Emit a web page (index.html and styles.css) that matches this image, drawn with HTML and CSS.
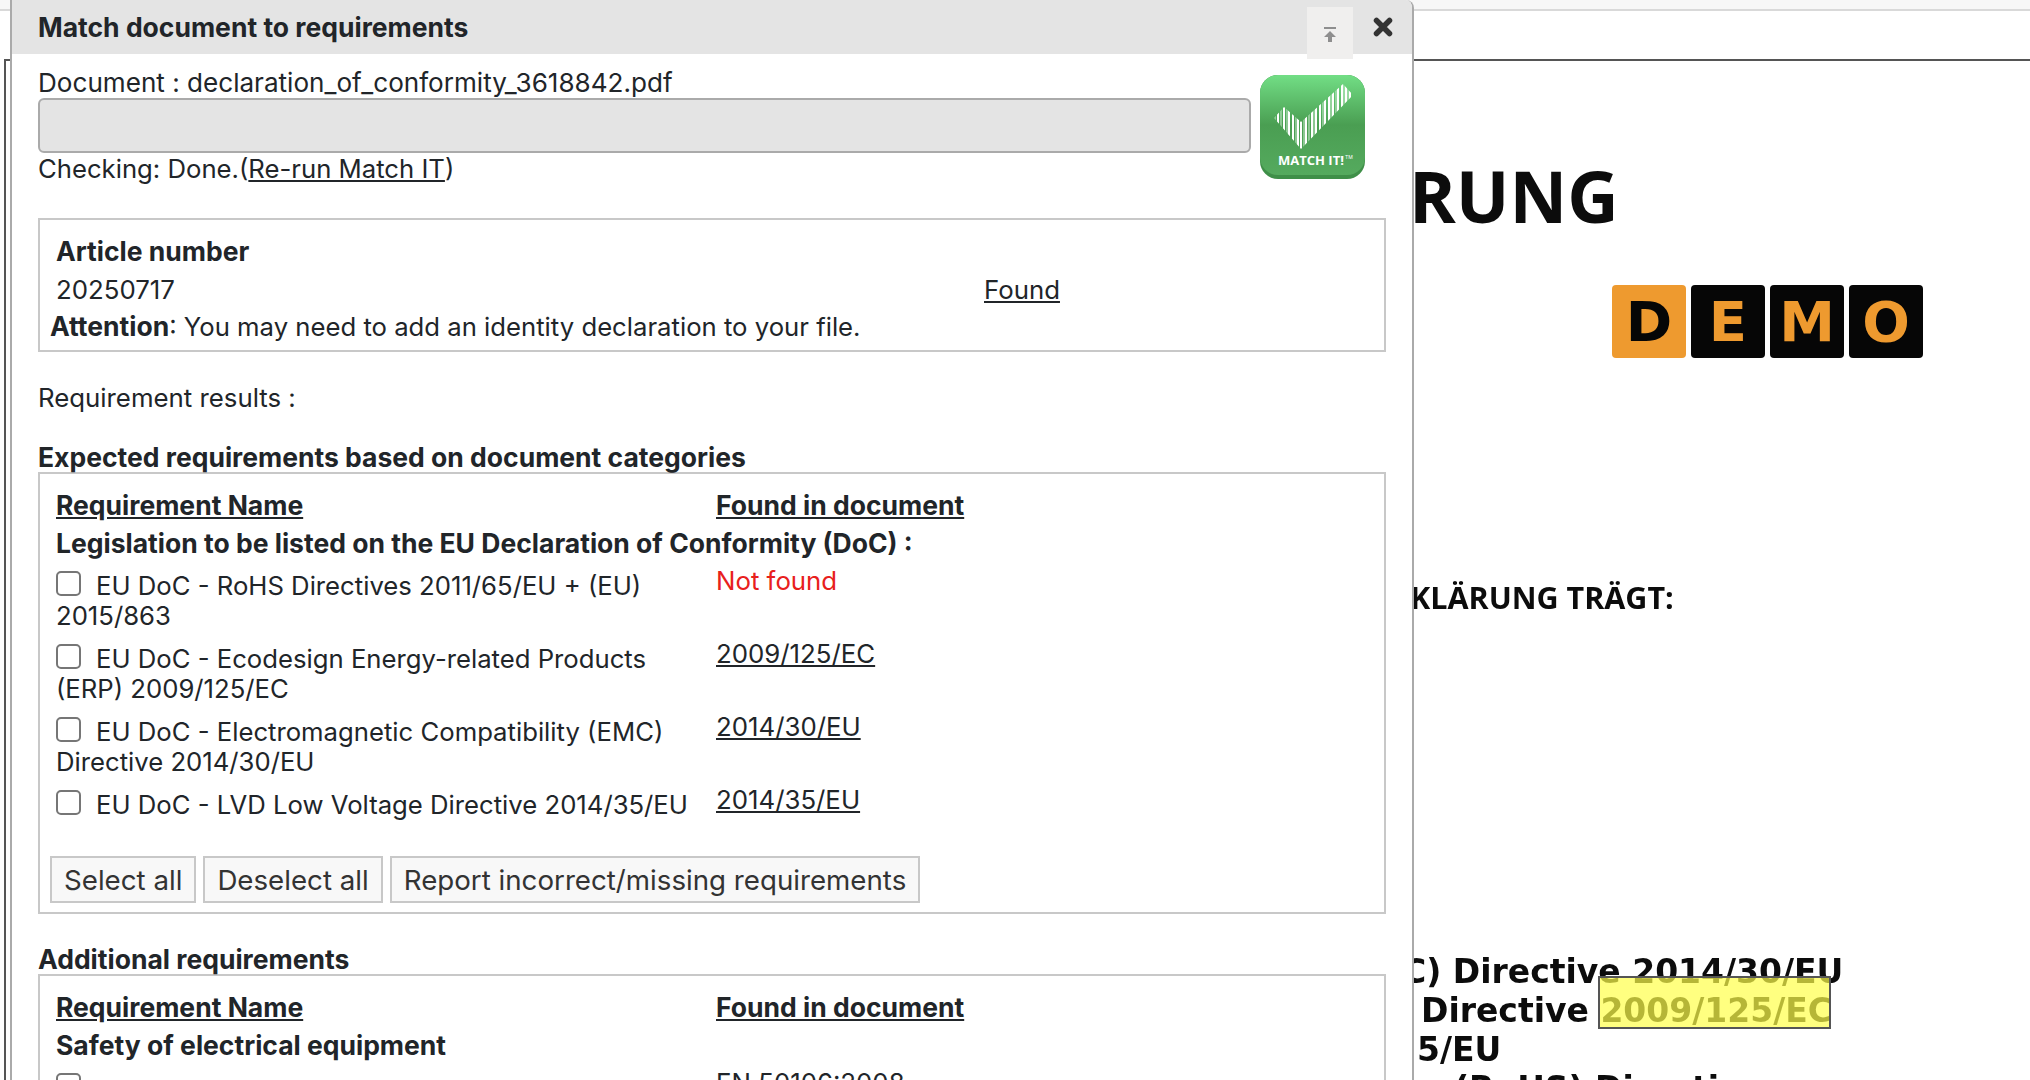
FILE: index.html
```html
<!DOCTYPE html>
<html lang="en">
<head>
    <meta charset="UTF-8">
    <meta name="viewport" content="width=device-width, initial-scale=1.0">
    <title>Match document to requirements</title>
    <link rel="stylesheet" href="styles.css">
</head>
<body>
    <div class="top-strip"></div>
    <div class="pdf-page">
        <div class="pdf-text pdf-title">RUNG</div>
        <div class="demo-stamp">
            <span class="demo-tile demo-first">D</span>
            <span class="demo-tile">E</span>
            <span class="demo-tile">M</span>
            <span class="demo-tile">O</span>
        </div>
        <div class="pdf-text pdf-sub">KLÄRUNG TRÄGT:</div>
        <div class="pdf-text pdf-line pdf-line1">C) Directive 2014/30/EU</div>
        <div class="pdf-text pdf-line pdf-line2">Directive 2009/125/EC</div>
        <div class="pdf-text pdf-line pdf-line3">5/EU</div>
        <div class="pdf-text pdf-line pdf-line4">(RoHS) Directive</div>
        <div class="pdf-highlight"></div>
    </div>

    <div class="dialog">
        <div class="dialog-title">
            <span class="dialog-title-text">Match document to requirements</span>
            <button class="pin-button" aria-label="Pin">
                <svg width="14" height="16" viewBox="0 0 14 16"><path d="M1 1h12" stroke="#8e8e8e" stroke-width="2"/><path d="M7 4l6 6H9v5H5v-5H1z" fill="#8e8e8e"/></svg>
            </button>
            <button class="close-button" aria-label="Close">
                <svg width="20" height="20" viewBox="0 0 20 20"><path d="M3.5 3.5l13 13M16.5 3.5l-13 13" stroke="#333" stroke-width="5.5" stroke-linecap="round"/></svg>
            </button>
        </div>
        <div class="dialog-body">
            <div class="match-header">
                <div class="match-status">
                    <div class="doc-name">Document : declaration_of_conformity_3618842.pdf</div>
                    <div class="progress"></div>
                    <div class="checking">Checking: Done.(<a href="#">Re-run Match IT</a>)</div>
                </div>
                <svg class="match-logo" width="105" height="104" viewBox="0 0 105 104">
                    <defs>
                        <linearGradient id="logoFill" x1="0" y1="0" x2="0" y2="1">
                            <stop offset="0" stop-color="#72de85"/>
                            <stop offset=".5" stop-color="#4a9e52"/>
                            <stop offset="1" stop-color="#55aa5e"/>
                        </linearGradient>
                        <clipPath id="logoCheck"><path d="M14 43l10-11 17 15L83 9l10 11-52 54z"/></clipPath>
                    </defs>
                    <rect x="0" y="0" width="105" height="104" rx="18" fill="#3f8f48"/>
                    <rect x="0" y="0" width="105" height="100" rx="18" fill="url(#logoFill)"/>
                    <g clip-path="url(#logoCheck)">
                        <path d="M18 0v80M24 0v80M29 0v80M33 0v80M38 0v80M41 0v80M46 0v80M52 0v80M56 0v80M60 0v80M65 0v80M69 0v80M73 0v80M78 0v80M82 0v80M86 0v80M90 0v80" stroke="#fff" stroke-width="2"/>
                        <path d="M15 0v80M21 0v80M27 0v80M36 0v80M44 0v80M49 0v80M54 0v80M63 0v80M71 0v80M76 0v80M84 0v80M88 0v80" stroke="#cfeed2" stroke-width="1"/>
                    </g>
                    <text x="18" y="90" class="logo-text">MATCH IT!</text>
                    <text x="85" y="84" class="logo-tm">TM</text>
                </svg>
            </div>

            <div class="box article-box">
                <div class="req-row article-row">
                    <div>
                        <strong>Article number</strong>
                        <div class="article-value">20250717</div>
                    </div>
                    <a href="#" class="article-found">Found</a>
                </div>
                <div class="attention"><strong>Attention</strong>: You may need to add an identity declaration to your file.</div>
            </div>

            <div class="results-label">Requirement results :</div>

            <h4 class="section-title">Expected requirements based on document categories</h4>
            <div class="box req-box">
                <div class="req-row req-head">
                    <span>Requirement Name</span>
                    <span>Found in document</span>
                </div>
                <div class="group-title">Legislation to be listed on the EU Declaration of Conformity (DoC) :</div>
                <div class="req-row req-item">
                    <label><input type="checkbox">EU DoC - RoHS Directives 2011/65/EU + (EU) 2015/863</label>
                    <span class="not-found">Not found</span>
                </div>
                <div class="req-row req-item">
                    <label><input type="checkbox">EU DoC - Ecodesign Energy-related Products (ERP) 2009/125/EC</label>
                    <a href="#">2009/125/EC</a>
                </div>
                <div class="req-row req-item">
                    <label><input type="checkbox">EU DoC - Electromagnetic Compatibility (EMC) Directive 2014/30/EU</label>
                    <a href="#">2014/30/EU</a>
                </div>
                <div class="req-row req-item">
                    <label><input type="checkbox">EU DoC - LVD Low Voltage Directive 2014/35/EU</label>
                    <a href="#">2014/35/EU</a>
                </div>
                <div class="box-actions">
                    <button class="plain-button">Select all</button>
                    <button class="plain-button">Deselect all</button>
                    <button class="plain-button">Report incorrect/missing requirements</button>
                </div>
            </div>

            <h4 class="section-title additional-title">Additional requirements</h4>
            <div class="box req-box">
                <div class="req-row req-head">
                    <span>Requirement Name</span>
                    <span>Found in document</span>
                </div>
                <div class="group-title">Safety of electrical equipment</div>
                <div class="req-row req-item">
                    <label><input type="checkbox"></label>
                    <a href="#">EN 50106:2008</a>
                </div>
            </div>
        </div>
    </div>
</body>
</html>
```

FILE: styles.css
```css
html, body { margin: 0; height: 100%; }
body {
    position: relative;
    height: 1080px;
    overflow: hidden;
    background-color: #fff;
    font-family: "Inter", "Roboto", sans-serif;
    font-size: 26px;
    color: #212529;
}
strong { font-size: 26.5px; }

.top-strip { height: 9px; background-color: #f7f7f7; border-bottom: 2px solid #d9d9d9; }

/* document behind the dialog */
.pdf-page {
    position: absolute;
    left: 4px;
    top: 59px;
    right: -4px;
    bottom: -4px;
    border: 2px solid #555;
    overflow: hidden;
}
.pdf-text {
    position: absolute;
    font-family: "Open Sans", "DejaVu Sans", sans-serif;
    font-weight: 700;
    color: #0c0c0c;
    white-space: nowrap;
    filter: blur(0.6px);
}
.pdf-title { left: 1403px; top: 87px; font-size: 71px; line-height: 96px; }
.pdf-sub { left: 1404px; top: 516px; font-size: 30.5px; line-height: 40px; }
.pdf-line { font-family: "DejaVu Sans", sans-serif; font-size: 33px; line-height: 39px; }
.pdf-line1 { left: 1396px; top: 891px; }
.pdf-line2 { left: 1415px; top: 930px; }
.pdf-line3 { left: 1411px; top: 969px; }
.pdf-line4 { left: 1448px; top: 1008px; }

.demo-stamp { position: absolute; left: 1606px; top: 224px; display: flex; gap: 5px; }
.demo-tile {
    width: 74px;
    height: 73px;
    display: flex;
    align-items: center;
    justify-content: center;
    background-color: #060606;
    color: #ee9a2f;
    border-radius: 4px;
    font-family: "DejaVu Sans", sans-serif;
    font-weight: 700;
    font-size: 56px;
    filter: blur(0.5px);
}
.demo-first { background-color: #ee9a2f; color: #060606; }

.pdf-highlight {
    position: absolute;
    left: 1592px;
    top: 915px;
    width: 229px;
    height: 49px;
    background-color: rgba(255, 255, 74, 0.7);
    border: 2px solid #555;
}

/* dialog */
.dialog {
    position: absolute;
    left: 10px;
    top: 0;
    width: 1400px;
    height: 1090px;
    background-color: #fff;
    border: 2px solid #aaa;
    border-top: none;
    border-top-right-radius: 8px;
    overflow: hidden;
}
.dialog-title {
    height: 54px;
    background-color: #e4e4e4;
    display: flex;
    align-items: center;
    padding-left: 26px;
}
.dialog-title-text { flex: 1; font-weight: 700; font-size: 26.5px; }
.pin-button {
    width: 46px;
    height: 52px;
    margin-top: 12px;
    margin-right: 18px;
    padding: 6px 0 0;
    background-color: #f0efee;
    border: none;
}
.close-button { width: 24px; height: 24px; padding: 0; margin-right: 17px; background: none; border: none; display: flex; align-items: center; justify-content: center; }

.dialog-body { padding: 14px 26px 0 26px; }

.match-header { display: flex; height: 124px; }
.match-status { width: 1213px; flex: none; }
.doc-name { line-height: 30px; font-size: 26.1px; }
.progress {
    height: 55px;
    box-sizing: border-box;
    background-color: #e4e4e4;
    border: 2px solid #aaa;
    border-radius: 6px;
}
.checking { line-height: 31px; font-size: 25.7px; }
a { color: inherit; }
.match-logo { margin: 7px 0 0 9px; flex: none; }
.logo-text { font-family: "Open Sans", sans-serif; font-size: 13px; font-weight: 700; fill: #fff; }
.logo-tm { font-size: 5px; fill: #fff; }

.box { border: 2px solid #c8c8c8; }
.article-box { margin-top: 26px; height: 134px; box-sizing: border-box; padding: 13px 0 0 16px; line-height: 36px; }
.req-row { display: grid; grid-template-columns: 660px 1fr; font-size: 25.8px; }
.article-row { grid-template-columns: 928px 1fr; }
.article-value { line-height: 39px; }
.article-found { align-self: end; line-height: 39px; }
.attention { margin-left: -6px; line-height: 34px; font-size: 25.7px; }

.results-label { margin-top: 29px; line-height: 34px; font-size: 25.8px; }

.section-title { margin: 27px 0 0; font-size: 26.5px; line-height: 30px; font-weight: 700; }
.additional-title { margin-top: 30px; }

.req-box { padding: 13px 16px 9px; box-sizing: border-box; }
.req-head { font-weight: 700; font-size: 26.5px; text-decoration: underline; line-height: 36px; }
.group-title { font-weight: 700; font-size: 26.5px; line-height: 40px; margin-bottom: 3px; }
.req-item { line-height: 30px; margin-bottom: 8px; align-items: start; }
.req-item label { display: block; padding: 5px 20px 0 0; font-size: 25.7px; }
.req-item input {
    appearance: none;
    width: 25px;
    height: 25px;
    margin: 0 15px 0 0;
    vertical-align: top;
    background-color: #fff;
    border: 2px solid #767676;
    border-radius: 5px;
}
.not-found { color: #e8201c; }

.box-actions { display: flex; gap: 7px; margin: 36px 0 0 -6px; }
.plain-button {
    height: 47px;
    padding: 0 12px;
    background-color: #f8f8f8;
    border: 2px solid #c8c8c8;
    font-family: inherit;
    font-size: 27.7px;
    color: #333;
}
```
